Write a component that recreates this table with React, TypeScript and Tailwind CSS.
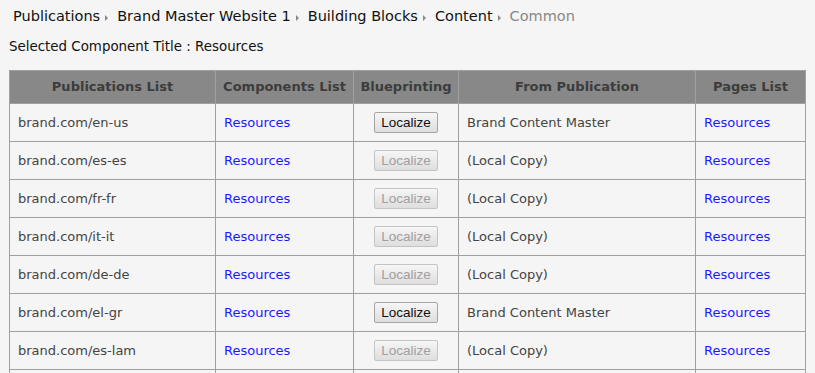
const ROWS: { pub: string; local: boolean }[] = [
  { pub: "brand.com/en-us", local: false },
  { pub: "brand.com/es-es", local: true },
  { pub: "brand.com/fr-fr", local: true },
  { pub: "brand.com/it-it", local: true },
  { pub: "brand.com/de-de", local: true },
  { pub: "brand.com/el-gr", local: false },
  { pub: "brand.com/es-lam", local: true },
  { pub: "brand.com/nl-nl", local: true },
]

const CRUMBS = ["Publications", "Brand Master Website 1", "Building Blocks", "Content"]

function Caret() {
  return (
    <svg width="3" height="6" viewBox="0 0 3 6" className="ml-[5px] mr-[9px] mt-[3px] inline-block">
      <path d="M0 0 L3 3 L0 6 Z" fill="#888" />
    </svg>
  )
}

function LocalizeButton({ disabled }: { disabled: boolean }) {
  return (
    <button
      type="button"
      disabled={disabled}
      className={
        "h-[21px] w-[64px] rounded-[2px] border bg-gradient-to-b from-[#f6f6f6] to-[#dedede] text-[13.5px] leading-none font-['Liberation_Sans',Arial,sans-serif] " +
        (disabled ? "border-[#c4c4c4] text-[#a0a0a0]" : "border-[#a6a6a6] text-[#111]")
      }
    >
      Localize
    </button>
  )
}

export default function App() {
  return (
    <div className="h-[373px] overflow-hidden bg-[#f5f5f5] font-['DejaVu_Sans',Verdana,sans-serif] text-[#333]">
      <nav className="flex items-center pl-[13px] pt-[6px] text-[14.5px] leading-[20px] text-[#111]">
        {CRUMBS.map((c) => (
          <span key={c} className="flex items-center">
            {c}
            <Caret />
          </span>
        ))}
        <span className="text-[#888]">Common</span>
      </nav>

      <p className="mt-[12px] pl-[9px] text-[13.4px] leading-[18px] text-[#111]">
        Selected Component Title : Resources
      </p>

      <table className="mt-[14px] ml-[9px] w-[797px] border-collapse text-[13px]">
        <thead>
          <tr className="h-[33px] bg-[#888] text-[#3c3c3c]">
            <th className="w-[206px] border border-[#a0a0a0] font-bold">Publications List</th>
            <th className="w-[138px] border border-[#a0a0a0] font-bold">Components List</th>
            <th className="w-[105px] border border-[#a0a0a0] font-bold">Blueprinting</th>
            <th className="w-[237px] border border-[#a0a0a0] font-bold">From Publication</th>
            <th className="border border-[#a0a0a0] font-bold">Pages List</th>
          </tr>
        </thead>
        <tbody>
          {ROWS.map((r) => (
            <tr key={r.pub} className="h-[38px]">
              <td className="border border-[#a0a0a0] pl-[8px] text-[#444]">{r.pub}</td>
              <td className="border border-[#a0a0a0] pl-[8px]">
                <a className="text-[#1a1aff]">Resources</a>
              </td>
              <td className="border border-[#a0a0a0] text-center">
                <LocalizeButton disabled={r.local} />
              </td>
              <td className="border border-[#a0a0a0] pl-[8px] text-[#444]">
                {r.local ? "(Local Copy)" : "Brand Content Master"}
              </td>
              <td className="border border-[#a0a0a0] pl-[8px]">
                <a className="text-[#1a1aff]">Resources</a>
              </td>
            </tr>
          ))}
        </tbody>
      </table>
    </div>
  )
}
